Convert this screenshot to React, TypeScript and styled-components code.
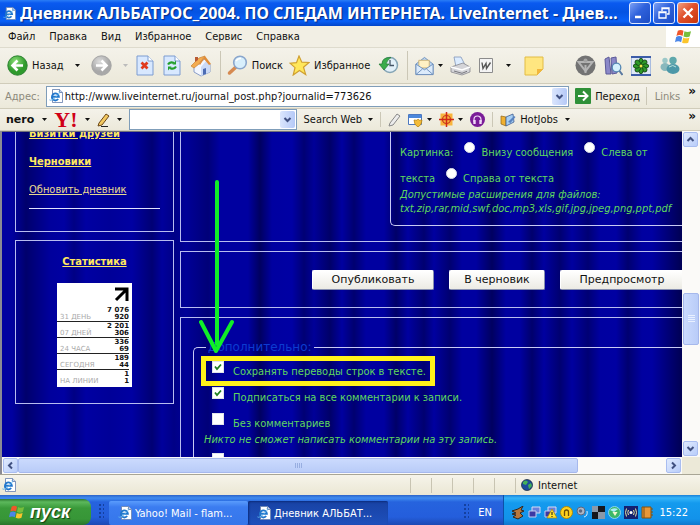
import React from "react";
import styled, { createGlobalStyle, css } from "styled-components";

const ui = `"DejaVu Sans Condensed", "DejaVu Sans", sans-serif`;
const wide = `"DejaVu Sans", sans-serif`;

const GlobalStyle = createGlobalStyle`
  * { box-sizing: border-box; }
  body { margin: 0; font: 11px ${ui}; color: #111; background: #ece9d8; }
  button, input { font: inherit; color: inherit; margin: 0; }
  button { padding: 0; border: 0; background: none; white-space: nowrap; }
  svg { display: block; flex: none; }
`;

const Screen = styled.div`
  display: flex;
  flex-direction: column;
  height: 100vh;
  overflow: hidden;
`;

/* ---------- window chrome ---------- */

const TitleBar = styled.header`
  display: flex;
  align-items: center;
  flex: none;
  height: 26px;
  padding: 0 1px 0 3px;
  gap: 4px;
  background: linear-gradient(#2a7df6 0, #0a5af0 3px, #0453e2 12px, #0860f8 21px, #0345c8 26px);
`;

const Title = styled.h1`
  flex: 1;
  min-width: 0;
  margin: 0;
  overflow: hidden;
  white-space: nowrap;
  text-overflow: ellipsis;
  color: #fff;
  font: 700 16px/24px "Noto Sans", "Open Sans", sans-serif;
  text-shadow: 1px 1px 1px #0a2a80;
`;

const WindowButtons = styled.div`
  display: flex;
  gap: 2px;
`;

const WindowButton = styled.button<{ $close?: boolean }>`
  display: grid;
  place-items: center;
  width: 22px;
  height: 22px;
  border: 1px solid #dfe8ff;
  border-radius: 3px;
  background: ${(p) =>
    p.$close
      ? "linear-gradient(135deg, #f0a080, #e0502c 45%, #c8340c)"
      : "linear-gradient(135deg, #7ba0f4, #2f62dc 45%, #1c4cc4)"};
`;

const MenuBar = styled.nav`
  display: flex;
  align-items: stretch;
  flex: none;
  height: 22px;
  padding-left: 8px;
  gap: 14px;
  background: #f2efe4;
  border-bottom: 1px solid #dedbcd;
`;

const FlagBox = styled.div`
  display: grid;
  place-items: center;
  width: 34px;
  margin-left: auto;
  background: #fff;
`;

const ToolBar = styled.div<{ $height: number }>`
  display: flex;
  align-items: center;
  flex: none;
  height: ${(p) => p.$height}px;
  background: linear-gradient(#f4f2ea, #ece9da);
  border-bottom: 1px solid #d0ccba;
  white-space: nowrap;
`;

const MainTools = styled(ToolBar)`
  padding: 0 20px 0 7px;
  gap: 8px;
`;

const Group = styled.div<{ $gap: number; $end?: boolean }>`
  display: flex;
  align-items: center;
  align-self: stretch;
  gap: ${(p) => p.$gap}px;
  margin-left: ${(p) => (p.$end ? "auto" : "0")};
`;

const ToolButton = styled.button`
  display: flex;
  align-items: center;
  gap: 4px;
`;

const Divider = styled.span`
  width: 1px;
  align-self: stretch;
  margin: 3px 0;
  background: #cbc7b6;
`;

const AddressTools = styled(ToolBar)`
  padding: 0 4px 0 5px;
  gap: 6px;
`;

const AddressLabel = styled.label`
  color: #8c897c;
`;

const AddressBox = styled.div`
  display: flex;
  align-items: center;
  flex: 1;
  height: 21px;
  padding-left: 2px;
  gap: 2px;
  border: 1px solid #7f9db9;
  background: #fff;
`;

const BareInput = styled.input`
  flex: 1;
  min-width: 0;
  height: 17px;
  padding: 0;
  border: 0;
  outline: 0;
  background: transparent;
`;

const DropButton = styled.button`
  display: grid;
  place-items: center;
  width: 15px;
  align-self: stretch;
  margin: 1px;
  border-radius: 2px;
  background: linear-gradient(90deg, #dbe6fd, #b5c9f7);
`;

const Muted = styled.span`
  color: #8c897c;
`;

const Chevron = styled.button`
  align-self: flex-start;
  font: bold 12px/14px ${wide};
`;

const SearchTools = styled(ToolBar)`
  padding: 0 4px 0 6px;
  gap: 7px;
`;

const Brand = styled.span`
  font: bold 11px/16px ${wide};
  margin-right: 1px;
`;

const YahooMark = styled.span`
  color: #d00018;
  font: bold 22px/20px "Liberation Serif", serif;
`;

const SearchBox = styled(AddressBox)`
  flex: 0 0 168px;
`;

/* ---------- page area ---------- */

const Viewport = styled.main`
  display: grid;
  grid-template: minmax(0, 1fr) 17px / minmax(0, 1fr) 18px;
  flex: 1;
  min-height: 0;
  border-left: 2px solid #8a8a94;
`;

const PageClip = styled.div`
  position: relative;
  overflow: hidden;
  border-top: 1px solid #70707a;
  background: linear-gradient(
    90deg,
    #0000a0 0, #0000a0 10px, #00006c 24px, #00009c 48px, #0000a2 62px, #000084 72px,
    #0000a2 84px, #000098 108px, #0000a2 130px, #000074 150px, #00009c 160px, #000086 172px,
    #000098 184px, #000078 206px, #0000a0 218px, #0000a0 246px, #000060 258px,
    #0000a0 270px, #0000a4 290px, #000074 302px, #000098 312px, #000068 328px,
    #0000a0 340px, #000070 352px, #0000a0 364px, #0000a0 382px, #000068 394px,
    #0000a0 406px, #000070 422px, #0000a0 432px, #000070 448px, #0000a0 460px,
    #0000a0 474px, #000060 490px, #0000a0 504px, #0000a0 518px, #00006c 530px,
    #0000a0 542px, #000070 558px, #0000a0 570px, #000074 586px, #0000a0 598px,
    #0000a2 614px, #000070 626px, #0000a0 640px, #0000a2 650px, #000058 678px
  );
`;

const ScrolledPage = styled.div`
  display: flex;
  align-items: flex-start;
  gap: 6px;
  margin-top: -13px;
  padding-left: 13px;
`;

const Sidebar = styled.aside`
  display: flex;
  flex-direction: column;
  gap: 8px;
  flex: none;
  width: 159px;
`;

const Frame = styled.section`
  border: 1px solid #b8bcf0;
`;

const LinksFrame = styled(Frame)`
  height: 113px;
  padding: 0 13px;
`;

const SideLink = styled.a<{ $bold?: boolean }>`
  display: block;
  color: ${(p) => (p.$bold ? "#ffe860" : "#e8d890")};
  font-weight: ${(p) => (p.$bold ? "bold" : "normal")};
  line-height: 28px;
`;

const Rule = styled.hr`
  margin: 4px 0 0;
  border: 0;
  border-top: 1px solid #e0e2ff;
`;

const StatsFrame = styled(Frame)`
  display: flex;
  flex-direction: column;
  align-items: center;
  padding: 7px 0 16px;
`;

const Counter = styled.div`
  width: 75px;
  margin-top: 7px;
  padding-bottom: 2px;
  background: #fff;
`;

const CounterTop = styled.div`
  display: flex;
  justify-content: flex-end;
  height: 22px;
  padding: 4px 3px 0;
`;

const CounterTable = styled.table`
  width: 72px;
  border-collapse: collapse;
  font: bold 7px/7px ${wide};

  tr + tr { border-top: 1px solid #222; }
  th, td { height: 16px; padding: 1px 0 0; vertical-align: bottom; }
  th { padding-left: 3px; color: #aaa; font-weight: normal; text-align: left; white-space: nowrap; }
  td { text-align: right; white-space: pre-line; }
`;

const Content = styled.div`
  display: flex;
  flex-direction: column;
  gap: 9px;
  flex: 1;
  min-width: 0;
`;

const Section = styled(Frame)<{ $height?: number }>`
  height: ${(p) => (p.$height ? p.$height + "px" : "auto")};
  border-right: 0;
`;

const FieldBox = styled.fieldset`
  min-width: 0;
  margin: 0;
  border: 1px solid #c8caf4;
  border-right: 0;
  border-radius: 5px 0 0 5px;
  color: #5fd85f;
`;

const UploadBox = styled(FieldBox)`
  height: 106px;
  margin-left: 209px;
  padding: 15px 0 0 9px;
  white-space: nowrap;
`;

const OptionLine = styled.div`
  display: flex;
  height: 26px;
  align-items: flex-end;
  line-height: 18px;
`;

const OptionLabel = styled.label`
  display: flex;
  align-items: flex-end;
  gap: 6px;
  margin-left: 11px;
`;

const Radio = styled.input`
  appearance: none;
  width: 11px;
  height: 11px;
  margin-bottom: 9px;
  border: 1px solid #d8dce8;
  border-radius: 50%;
  background: #fff;
`;

const Hint = styled.p`
  margin: 0;
  font-style: italic;
  line-height: 14px;
  white-space: nowrap;
`;

const ButtonRow = styled(Section)`
  display: flex;
  align-items: center;
  gap: 15px;
  padding-left: 131px;
`;

const FormButton = styled.button<{ $width: number }>`
  flex: none;
  width: ${(p) => p.$width}px;
  height: 20px;
  border: 1px solid #fff;
  border-right-color: #8890b0;
  border-bottom-color: #8890b0;
  border-radius: 2px;
  background: linear-gradient(#fff, #ecebe4);
  font: 11px ${wide};
`;

const ExtraBox = styled(FieldBox)`
  height: 190px;
  margin: 21px 0 0 12px;
  padding: 0 0 0 10px;
`;

const Legend = styled.legend`
  margin-left: 2px;
  padding: 0 2px;
  color: #0c3cd0;
  font: 12px/16px ${wide};
`;

const CheckLabel = styled.label`
  display: flex;
  align-items: flex-end;
  gap: 9px;
  height: 26px;
  padding-left: 8px;
  line-height: 18px;
`;

const Checkbox = styled.input`
  appearance: none;
  flex: none;
  width: 12px;
  height: 12px;
  margin-bottom: 8px;
  border: 1px solid #e0e4ea;
  background: #fff;
  &:checked {
    background: #fff
      url("data:image/svg+xml,%3Csvg xmlns='http://www.w3.org/2000/svg' viewBox='0 0 10 10'%3E%3Cpath d='M2 4.5l2 2.5 4-4.5' fill='none' stroke='%23208020' stroke-width='1.8'/%3E%3C/svg%3E")
      center / 10px;
  }
`;

const Highlight = styled.div`
  position: absolute;
  left: 199px;
  top: 224px;
  width: 234px;
  height: 30px;
  border: 5px solid #fff21a;
  pointer-events: none;
`;

const Arrow = styled.svg`
  position: absolute;
  left: 193px;
  top: 42px;
  pointer-events: none;
`;

/* ---------- scroll bars ---------- */

const ScrollTrack = styled.div<{ $row?: boolean }>`
  display: flex;
  flex-direction: ${(p) => (p.$row ? "row" : "column")};
  padding: 1px;
  background: #fbfaf8;
`;

const ScrollButton = styled.button`
  display: grid;
  place-items: center;
  flex: none;
  width: 15px;
  height: 15px;
  border: 1px solid #a9bdf0;
  border-radius: 2px;
  background: linear-gradient(135deg, #e0eafe, #b9cdfa);
`;

const Space = styled.span<{ $grow: number }>`
  flex: ${(p) => p.$grow} 0 0;
`;

const Thumb = styled.div<{ $grow: number; $row?: boolean }>`
  display: grid;
  place-items: center;
  flex: ${(p) => p.$grow} 0 0;
  border: 1px solid #a6b8ec;
  border-radius: 2px;
  background: ${(p) => (p.$row ? "linear-gradient(#cbdafd, #b9ccf8)" : "linear-gradient(90deg, #cbdafd, #b9ccf8)")};
`;

const Corner = styled.div`
  background: #ece9d8;
`;

/* ---------- status and task bars ---------- */

const StatusBar = styled.footer`
  display: flex;
  align-items: center;
  flex: none;
  height: 21px;
  padding-left: 2px;
  border-top: 1px solid #a8a595;
  background: linear-gradient(#f6f4ea, #ebe7d4);
`;

const StatusCell = styled.div<{ $width: number }>`
  display: flex;
  align-items: center;
  gap: 5px;
  flex: none;
  width: ${(p) => p.$width}px;
  height: 15px;
  padding-left: 5px;
  border-left: 1px solid #c8c4b2;
`;

const TaskBar = styled.div`
  display: flex;
  align-items: stretch;
  flex: none;
  height: 30px;
  color: #fff;
  background: linear-gradient(#2c63c8 0, #3f8cf0 3px, #2663de 7px, #245edc 22px, #1c49b4 30px);
`;

const StartButton = styled.button`
  display: flex;
  align-items: center;
  gap: 5px;
  width: 91px;
  margin-top: 4px;
  padding-left: 9px;
  border-radius: 0 8px 8px 0;
  background: linear-gradient(#2f7a2f 0, #5cb85c 3px, #3a9a3a 9px, #379637 20px, #28742a);
  font: italic bold 18px/22px "Liberation Sans", sans-serif;
  text-shadow: 1px 1px 1px #123f12;
`;

const Grip = styled.span`
  width: 5px;
  margin: 9px 5px 5px 8px;
  background: radial-gradient(circle at 1px 1px, #1440a0 1px, transparent 1px) 0 0 / 4px 4px;
`;

const Task = styled.button<{ $active?: boolean }>`
  display: flex;
  align-items: center;
  gap: 3px;
  width: ${(p) => (p.$active ? "140px" : "139px")};
  margin-top: 6px;
  padding-left: 9px;
  border-radius: 2px;
  background: ${(p) => (p.$active ? "linear-gradient(#1842a4, #1e50bc)" : "linear-gradient(#5a9cfc, #3b7cf0 6px, #3576ea)")};
  ${(p) => p.$active && css`box-shadow: inset 1px 1px 2px #0c2c7c;`}
`;

const TaskText = styled.span`
  overflow: hidden;
  text-overflow: ellipsis;
`;

const Tray = styled.div`
  display: flex;
  align-items: center;
  gap: 3px;
  width: 197px;
  padding: 5px 12px 0 8px;
  border-left: 1px solid #0c50a8;
  background: linear-gradient(#1a80d8 0, #34b4f8 3px, #149aee 8px, #1292ea 24px, #0f76cc);
`;

const Language = styled.span`
  align-self: center;
  padding: 5px 11px 0 4px;
`;

const Clock = styled.time`
  margin-left: auto;
`;

/* ---------- drawings ---------- */

const Caret = ({ dim }: { dim?: boolean }) => (
  <svg width="5" height="3"><path d="M0 0h5L2.500 3z" fill={dim ? "#bbb" : "#111"} /></svg>
);

const Angle = ({ turn = 0 }: { turn?: number }) => (
  <svg width="9" height="9" viewBox="0 0 9 9">
    <path d="M1.500 3l3 3 3-3" transform={`rotate(${turn} 4.500 4.500)`} fill="none" stroke="#405080" strokeWidth="2" />
  </svg>
);

const IePage = ({ size = 14 }: { size?: number }) => (
  <svg width={size} height={size} viewBox="0 0 16 16">
    <path d="M4 .5h8l3.500 3.500v11.500H4z" fill="#fff" stroke="#6a83b0" />
    <path d="M12 .5V4h3.500" fill="#c5d4ee" stroke="#6a83b0" />
    <path d="M10.500 11.500a4 4 0 1 1 .8-2.600H4" fill="none" stroke="#2277cc" strokeWidth="2.100" />
    <path d="M1 12C0 14 4 13 8 9s5-6 3-6" fill="none" stroke="#5fb4ec" strokeWidth="1" />
  </svg>
);

const Flag = ({ size = 17 }: { size?: number }) => (
  <svg width={size} height={size} viewBox="0 0 18 18">
    <path d="M3 3q3-2 6 0L8 8.500q-3-2-6.500 0z" fill="#f0562a" />
    <path d="M10 3.500q3 1.500 7 0L15.500 9q-3 1.500-6.500 0z" fill="#78be3c" />
    <path d="M1.200 9.500q3-2 6.500 0L6.500 15q-3-2-6.500 0z" fill="#4a86e8" />
    <path d="M8.700 10q3 1.800 6.600 0L14 15.500q-3 1.500-6.500 0z" fill="#fbc52c" />
  </svg>
);

const RoundArrow = ({ back }: { back?: boolean }) => (
  <svg width="21" height="21" viewBox="0 0 21 21">
    <defs>
      <radialGradient id={back ? "ga" : "gb"} cx="40%" cy="30%">
        <stop offset="0" stopColor={back ? "#8ee07a" : "#ddd"} />
        <stop offset="1" stopColor={back ? "#2f9a2c" : "#a8a8a8"} />
      </radialGradient>
    </defs>
    <circle cx="10.500" cy="10.500" r="9.700" fill={back ? "url(#ga)" : "url(#gb)"} stroke={back ? "#2b8230" : "#a4a4a4"} />
    <path
      d="M16 10.500H6M10.500 5.500l-5 5 5 5"
      transform={back ? undefined : "rotate(180 10.500 10.500)"}
      fill="none" stroke="#fff" strokeWidth="2.600"
    />
  </svg>
);

const PageIcon = ({ kind }: { kind: "stop" | "refresh" }) => (
  <svg width="18" height="21" viewBox="0 0 18 21">
    <path d="M1 1h11l5 5v14H1z" fill="#d8e8ff" stroke="#7c9cd0" />
    <path d="M12 1v5h5" fill="#fff" stroke="#7c9cd0" />
    {kind === "stop" ? (
      <path d="M5.500 7.500l6 6M11.500 7.500l-6 6" stroke="#e03a20" strokeWidth="2.800" />
    ) : (
      <g fill="none" stroke="#23a02c" strokeWidth="2.200">
        <path d="M5 9.500q2-3.500 6-1.500M13 11.500q-2 3.500-6 1.500" />
        <path d="M9.500 9.500H13V5.500zM8.500 11.500H5v4z" fill="#23a02c" stroke="none" />
      </g>
    )}
  </svg>
);

const Home = () => (
  <svg width="22" height="22" viewBox="0 0 22 22">
    <path d="M4 10v7l7 4 9-4V9l-5-5z" fill="#f3f7ff" stroke="#8a9ec8" />
    <path d="M11 12v9l9-4V9l-4-3z" fill="#cbdaf6" />
    <path d="M1 11L9 3l6-2-6 8-5 4z" fill="#f4ac50" stroke="#c88438" strokeWidth=".7" />
    <path d="M15 1l6 8-2 1-5-6-4 6-1-1z" fill="#e08c38" />
    <path d="M13 14l3-1v6l-3 1z" fill="#4c6cb4" />
    <path d="M5 2h3v3L5 7z" fill="#b85a34" />
  </svg>
);

const Search = () => (
  <svg width="21" height="21" viewBox="0 0 21 21">
    <path d="M2.500 18l7-6.500" stroke="#d68a50" strokeWidth="3.500" strokeLinecap="round" />
    <circle cx="13" cy="7.500" r="6.300" fill="#d8effc" stroke="#8aa6cc" strokeWidth="1.600" />
    <path d="M9 6q2-3 5-2.500" stroke="#fff" strokeWidth="1.500" fill="none" />
  </svg>
);

const Star = () => (
  <svg width="21" height="21" viewBox="0 0 21 21">
    <path d="M10 1l2.800 6.200 7.200.3-5.500 4.700 2.200 7.300-6.200-4-6.300 4.500 1.800-7.400L1 8.200l6.500-.6z" fill="#ffe75a" stroke="#d0a030" strokeWidth="1.200" />
  </svg>
);

const History = () => (
  <svg width="21" height="19" viewBox="0 0 21 19">
    <circle cx="12" cy="9" r="7.500" fill="#e2f0f8" stroke="#84a4b4" strokeWidth="1.500" />
    <path d="M12 4v5.500h4" stroke="#456" fill="none" strokeWidth="1.300" />
    <path d="M1 8l5 6 5-6H8q1-4 5-6.500Q4 1 4 8z" fill="#3aac4c" stroke="#207830" strokeWidth=".7" />
  </svg>
);

const Mail = () => (
  <svg width="19" height="20" viewBox="0 0 20 20">
    <path d="M1 8l9-7 9 7v11H1z" fill="#b9d4f2" stroke="#6f90bc" />
    <path d="M4 4h11v8H4z" fill="#fff1c4" stroke="#c8a860" strokeWidth=".8" />
    <path d="M1 8l9 6 9-6v11H1z" fill="#dcebfb" stroke="#6f90bc" />
    <path d="M1 19l7-6M19 19l-7-6" stroke="#6f90bc" />
  </svg>
);

const Printer = () => (
  <svg width="21" height="20" viewBox="0 0 21 20">
    <path d="M4 1h7l4 8-9 2z" fill="#dcecff" stroke="#8296b8" strokeWidth=".8" />
    <path d="M1 11l12-4 7 4v5l-8 3-11-3z" fill="#d4d4d8" stroke="#88888e" strokeWidth=".8" />
    <path d="M1 11l11 3 8-3" stroke="#fff" fill="none" strokeWidth="1.400" />
    <path d="M4 15l8 2.300 5-2" stroke="#77777d" fill="none" />
  </svg>
);

const Word = () => (
  <svg width="14" height="15" viewBox="0 0 14 15">
    <path d="M.5.5h13v14H.5z" fill="#f4f4f4" stroke="#8c8c8c" />
    <path d="M3 4.500l1 6 3-5 .500 5 4-6" fill="none" stroke="#555" strokeWidth="1.400" />
  </svg>
);

const Note = () => (
  <svg width="20" height="20" viewBox="0 0 20 20">
    <path d="M1 1h18v12l-6 6H1z" fill="#ffe680" stroke="#e2bc44" />
    <path d="M13 19v-6h6z" fill="#f2b63c" />
  </svg>
);

const GreyV = () => (
  <svg width="21" height="21" viewBox="0 0 21 21">
    <circle cx="10.500" cy="10.500" r="10" fill="#737373" />
    <path d="M3.500 7h14l-7 9z" fill="none" stroke="#b4b4b4" strokeWidth="2" />
    <path d="M10.500 10v8" stroke="#b4b4b4" strokeWidth="2" />
    <circle cx="10.500" cy="5.500" r="2" fill="#a4a4a4" />
  </svg>
);

const Books = () => (
  <svg width="19" height="20" viewBox="0 0 19 20">
    <path d="M1 3l4-2 2 17H2zM7 2l5-1 1 16-5 1z" fill="#8b88c8" stroke="#5c5a98" />
    <circle cx="12.500" cy="11.500" r="4.300" fill="#d4f0fc" stroke="#5688b4" strokeWidth="1.300" />
    <path d="M15.500 15l3 4" stroke="#5878a0" strokeWidth="2" />
  </svg>
);

const Flower = () => (
  <svg width="20" height="20" viewBox="0 0 20 20">
    <path d="M.5.5h19v19H.5z" fill="#dfe8f6" stroke="#a8bce0" />
    <path d="M0 1h20M0 19h20" stroke="#3c5ca8" strokeWidth="2" />
    {[0, 45, 90, 135, 180, 225, 270, 315].map((a) => (
      <ellipse key={a} cx="10" cy="5.500" rx="2.200" ry="3.200" fill="#2f9a28" stroke="#0f3c10" strokeWidth=".8" transform={`rotate(${a} 10 10)`} />
    ))}
    <circle cx="10" cy="10" r="1.500" fill="#f4e84c" />
  </svg>
);

const Buddies = () => (
  <svg width="21" height="19" viewBox="0 0 21 19">
    <circle cx="6" cy="4.500" r="2.700" fill="#9cc8c8" /><ellipse cx="6" cy="11" rx="4.500" ry="4" fill="#88b8bc" />
    <circle cx="14" cy="4.500" r="3.700" fill="#5fa8ac" /><ellipse cx="14" cy="13" rx="6.500" ry="5" fill="#4c98a8" />
    <path d="M10 11q4-3 7 0" stroke="#b8e0dc" fill="none" />
  </svg>
);

const Go = () => (
  <svg width="16" height="16" viewBox="0 0 16 16">
    <rect width="16" height="16" rx="1" fill="#2f9038" />
    <path d="M3 8h9M8 3.500L12.500 8 8 12.500" fill="none" stroke="#fff" strokeWidth="2" />
  </svg>
);

const Pencil = ({ grey }: { grey?: boolean }) => (
  <svg width="13" height="14" viewBox="0 0 13 14">
    <path d="M2 10L9 1l3 2-7 9-4 1z" fill={grey ? "#ececec" : "#f2c860"} stroke={grey ? "#888" : "#6c4818"} />
    {!grey && <path d="M4 13.500h7" stroke="#222" />}
  </svg>
);

const Shield = () => (
  <svg width="15" height="14" viewBox="0 0 15 14">
    <path d="M.5 1.500h13v10H.5z" fill="#fff" stroke="#4c78c0" /><path d="M1 2h12v3H1z" fill="#4c88dc" />
    <path d="M6 7q4 1 4-1 1 2 4 1 0 5-4 7-4-2-4-7z" fill="#f4bc38" stroke="#b07c10" strokeWidth=".7" />
  </svg>
);

const Target = () => (
  <svg width="15" height="15" viewBox="0 0 15 15">
    <path d="M1.500 1.500h12v12h-12z" fill="#f8b43c" />
    <circle cx="7.500" cy="7.500" r="4" fill="none" stroke="#c83820" strokeWidth="1.200" />
    <path d="M7.500 0v15M0 7.500h15" stroke="#d02818" strokeWidth="1.500" />
  </svg>
);

const Headset = () => (
  <svg width="15" height="15" viewBox="0 0 15 15">
    <circle cx="7.500" cy="7.500" r="7.500" fill="#7a1c98" />
    <path d="M4 10V7.500a3.500 3.500 0 0 1 7 0V10" fill="none" stroke="#f0d8f8" strokeWidth="1.200" />
    <path d="M4.500 8v4M10.500 8v4" stroke="#f0d8f8" strokeWidth="2.400" />
  </svg>
);

const Jobs = () => (
  <svg width="16" height="14" viewBox="0 0 16 14">
    <path d="M1 3l5 1v9l-5-2z" fill="#f0b030" stroke="#8c6418" strokeWidth=".7" />
    <path d="M6 4l7-3 1 8-8 4z" fill="#a8d0f4" stroke="#3c5c90" strokeWidth=".8" />
    <path d="M8 9l6-6 1.500 1-5 6z" fill="#5a84c0" />
  </svg>
);

const Globe = () => (
  <svg width="12" height="12" viewBox="0 0 12 12">
    <circle cx="6" cy="6" r="5.500" fill="#1c4c9c" stroke="#123" strokeWidth=".7" />
    <path d="M2 3q3-3 5 0L5 6 2 5zM7 6l3-2 1 3-3 3z" fill="#44b058" />
  </svg>
);

const Bird = () => (
  <svg width="13" height="14" viewBox="0 0 13 14">
    <path d="M0 5l6-2 5-3-2 4 3 1-4 2 3 3-5 3-5-2 3-2-4-1 4-1z" fill="#b8773c" stroke="#30261e" strokeWidth="1" />
  </svg>
);

const Monitors = ({ warn }: { warn?: boolean }) => (
  <svg width="13" height="13" viewBox="0 0 13 13">
    <path d="M4 1h8v6H4z" fill="#6880dc" stroke="#d4dcf4" /><path d="M1 5h7v6H1z" fill="#3c38a4" stroke="#c4ccf0" />
    {warn && <path d="M8 3l5 9H3z" fill="#ffe030" stroke="#a88408" strokeWidth=".7" />}
    {warn && <path d="M8 6v3M8 10v1" stroke="#111" />}
  </svg>
);

const YellowDot = () => (
  <svg width="13" height="13" viewBox="0 0 13 13">
    <circle cx="6.500" cy="6.500" r="6" fill="#ffd21c" stroke="#b08808" />
    <path d="M4.500 10V6a2 2 0 0 1 4 0v4" fill="none" stroke="#6c4c08" strokeWidth="1.300" />
  </svg>
);

const Speaker = () => (
  <svg width="13" height="13" viewBox="0 0 13 13">
    <circle cx="5" cy="5" r="4" fill="#aeb6c4" stroke="#5c6880" /><circle cx="4.500" cy="5" r="1.800" fill="#5c6880" />
    <path d="M8 11q4-1 3-6" fill="none" stroke="#d8ecfc" />
  </svg>
);

const Checker = () => (
  <svg width="13" height="13" viewBox="0 0 13 13">
    <path d="M0 0h13v13H0z" fill="#8c98a8" /><path d="M6 0h7v6H6zM0 6h6v7H0z" fill="#16161c" />
  </svg>
);

const GreenBall = () => (
  <svg width="13" height="13" viewBox="0 0 13 13">
    <circle cx="6.500" cy="6.500" r="6" fill="#3cb868" stroke="#88d0f4" />
    <path d="M2 4q3-3 8-1L6 6z" fill="#a8ecf8" /><path d="M4.500 6h5L7 10z" fill="#f4f8d0" />
  </svg>
);

const Wave = () => (
  <svg width="14" height="13" viewBox="0 0 14 13">
    <path d="M0 0h14v13H0z" fill="#142070" /><circle cx="7" cy="6.500" r="1.500" fill="#fff" />
    <path d="M4.500 4q-1.500 2.500 0 5M9.500 4q1.500 2.500 0 5M2.500 2.500q-2 4 0 8M11.500 2.500q2 4 0 8" fill="none" stroke="#e8e4a0" />
  </svg>
);

const Book = () => (
  <svg width="12" height="13" viewBox="0 0 12 13">
    <path d="M1 1h9v11H1z" fill="#e89838" stroke="#84500c" /><path d="M3 1v11M10 3h2M10 6h2M10 9h2" stroke="#84500c" />
  </svg>
);

/* ---------- data ---------- */

const menus = ["Файл", "Правка", "Вид", "Избранное", "Сервис", "Справка"];

const stats: [string, string, string][] = [
  ["31 ДЕНЬ", "7 076", "920"],
  ["07 ДНЕЙ", "2 201", "306"],
  ["24 ЧАСА", "336", "69"],
  ["СЕГОДНЯ", "189", "44"],
  ["НА ЛИНИИ", "1", "1"],
];

export default function App() {
  return (
    <Screen>
      <GlobalStyle />
      <TitleBar>
        <IePage size={13} />
        <Title>Дневник АЛЬБАТРОС_2004. ПО СЛЕДАМ ИНТЕРНЕТА. LiveInternet - Дневник</Title>
        <WindowButtons>
          <WindowButton aria-label="Свернуть">
            <svg width="14" height="14"><path d="M2 11h6" stroke="#fff" strokeWidth="2.500" /></svg>
          </WindowButton>
          <WindowButton aria-label="Восстановить">
            <svg width="14" height="14">
              <path d="M5 5V2h7v6h-2M2 6h7v6H2zM5 2.500h7M2 6.500h7" fill="none" stroke="#fff" strokeWidth="1.300" />
            </svg>
          </WindowButton>
          <WindowButton $close aria-label="Закрыть">
            <svg width="14" height="14"><path d="M2.500 2.500l9 9M11.500 2.500l-9 9" stroke="#fff" strokeWidth="2.300" /></svg>
          </WindowButton>
        </WindowButtons>
      </TitleBar>

      <MenuBar>
        {menus.map((m) => <button key={m}>{m}</button>)}
        <FlagBox><Flag /></FlagBox>
      </MenuBar>

      <MainTools $height={36}>
        <Group $gap={11}>
          <ToolButton><RoundArrow back />Назад</ToolButton>
          <Caret />
          <ToolButton aria-label="Вперед"><RoundArrow /></ToolButton>
          <Caret dim />
        </Group>
        <Group $gap={9}>
          <ToolButton aria-label="Остановить"><PageIcon kind="stop" /></ToolButton>
          <ToolButton aria-label="Обновить"><PageIcon kind="refresh" /></ToolButton>
          <ToolButton aria-label="Домой"><Home /></ToolButton>
        </Group>
        <Group $gap={6}>
          <Divider />
          <ToolButton><Search />Поиск</ToolButton>
          <ToolButton><Star />Избранное</ToolButton>
        </Group>
        <ToolButton aria-label="Журнал"><History /></ToolButton>
        <Group $gap={7}>
          <Divider />
          <ToolButton aria-label="Почта"><Mail /><Caret /></ToolButton>
          <ToolButton aria-label="Печать"><Printer /></ToolButton>
        </Group>
        <Group $gap={13}>
          <ToolButton aria-label="Правка"><Word /></ToolButton>
          <Caret />
          <ToolButton aria-label="Заметка"><Note /></ToolButton>
        </Group>
        <Group $gap={8} $end>
          <GreyV /><Books /><Flower /><Buddies />
        </Group>
      </MainTools>

      <AddressTools $height={25}>
        <AddressLabel htmlFor="address">Адрес:</AddressLabel>
        <AddressBox>
          <IePage />
          <BareInput id="address" defaultValue="http://www.liveinternet.ru/journal_post.php?journalid=773626" />
          <DropButton aria-label="Адреса"><Angle /></DropButton>
        </AddressBox>
        <ToolButton><Go />Переход</ToolButton>
        <Group $gap={8}>
          <Divider />
          <Muted>Links</Muted>
          <Chevron aria-label="Еще">»</Chevron>
        </Group>
      </AddressTools>

      <SearchTools $height={22}>
        <Brand>nero</Brand>
        <Caret />
        <YahooMark>Y!</YahooMark>
        <Caret />
        <Pencil />
        <Caret />
        <SearchBox>
          <BareInput aria-label="Search" />
          <DropButton aria-label="Запросы"><Angle /></DropButton>
        </SearchBox>
        <Group $gap={6}>
          <button>Search Web</button>
          <Caret />
        </Group>
        <Divider />
        <Pencil grey />
        <Group $gap={4}><Shield /><Caret /></Group>
        <Group $gap={4}><Target /><Caret /></Group>
        <Headset />
        <Divider />
        <ToolButton><Jobs />HotJobs</ToolButton>
        <Caret />
        <Group $gap={0} $end><Chevron aria-label="Еще">»</Chevron></Group>
      </SearchTools>

      <Viewport>
        <PageClip>
          <ScrolledPage>
            <Sidebar>
              <LinksFrame>
                <SideLink href="#cards" $bold>Визитки друзей</SideLink>
                <SideLink href="#drafts" $bold>Черновики</SideLink>
                <SideLink href="#update">Обновить дневник</SideLink>
                <Rule />
              </LinksFrame>
              <StatsFrame>
                <SideLink href="#stats" $bold>Статистика</SideLink>
                <Counter>
                  <CounterTop>
                    <svg width="15" height="15" viewBox="0 0 15 15">
                      <path d="M1 2h12v12M13 2L2 13" fill="none" stroke="#000" strokeWidth="3" />
                    </svg>
                  </CounterTop>
                  <CounterTable>
                    <tbody>
                      {stats.map(([name, hits, visitors]) => (
                        <tr key={name}>
                          <th scope="row">{name}</th>
                          <td>{hits}{"\n"}{visitors}</td>
                        </tr>
                      ))}
                    </tbody>
                  </CounterTable>
                </Counter>
              </StatsFrame>
            </Sidebar>

            <Content>
              <Section $height={123}>
                <UploadBox>
                  <OptionLine>
                    Картинка:
                    <OptionLabel><Radio type="radio" name="place" />Внизу сообщения</OptionLabel>
                    <OptionLabel><Radio type="radio" name="place" />Слева от</OptionLabel>
                  </OptionLine>
                  <OptionLine>
                    текста
                    <OptionLabel><Radio type="radio" name="place" />Справа от текста</OptionLabel>
                  </OptionLine>
                  <Hint>Допустимые расширения для файлов:</Hint>
                  <Hint>txt,zip,rar,mid,swf,doc,mp3,xls,gif,jpg,jpeg,png,ppt,pdf</Hint>
                </UploadBox>
              </Section>
              <ButtonRow $height={57}>
                <FormButton $width={122}>Опубликовать</FormButton>
                <FormButton $width={96}>В черновик</FormButton>
                <FormButton $width={124}>Предпросмотр</FormButton>
              </ButtonRow>
              <Section>
                <ExtraBox>
                  <Legend>Дополнительно:</Legend>
                  <CheckLabel><Checkbox type="checkbox" defaultChecked />Сохранять переводы строк в тексте.</CheckLabel>
                  <CheckLabel><Checkbox type="checkbox" defaultChecked />Подписаться на все комментарии к записи.</CheckLabel>
                  <CheckLabel><Checkbox type="checkbox" />Без комментариев</CheckLabel>
                  <Hint>Никто не сможет написать комментарии на эту запись.</Hint>
                  <CheckLabel><Checkbox type="checkbox" aria-label="Закрытая запись" /></CheckLabel>
                </ExtraBox>
              </Section>
            </Content>
          </ScrolledPage>
          <Arrow width="46" height="180" viewBox="0 0 46 180">
            <path d="M22 8v162M6 148l15 29 16-29" fill="none" stroke="#10ee28" strokeWidth="4" strokeLinecap="round" strokeLinejoin="round" />
          </Arrow>
          <Highlight />
        </PageClip>
        <ScrollTrack>
          <ScrollButton aria-label="Вверх"><Angle turn={180} /></ScrollButton>
          <Space $grow={147} />
          <Thumb $grow={50}>
            <svg width="7" height="7"><path d="M0 .5h7M0 2.500h7M0 4.500h7M0 6.500h7" stroke="#e8f0ff" /></svg>
          </Thumb>
          <Space $grow={97} />
          <ScrollButton aria-label="Вниз"><Angle /></ScrollButton>
        </ScrollTrack>
        <ScrollTrack $row>
          <ScrollButton aria-label="Влево"><Angle turn={90} /></ScrollButton>
          <Thumb $grow={560} $row>
            <svg width="7" height="7"><path d="M.5 1v5M2.500 1v5M4.500 1v5M6.500 1v5" stroke="#98aee0" /></svg>
          </Thumb>
          <Space $grow={88} />
          <ScrollButton aria-label="Вправо"><Angle turn={-90} /></ScrollButton>
        </ScrollTrack>
        <Corner />
      </Viewport>

      <StatusBar>
        <IePage />
        <Space $grow={1} />
        {[1, 2, 3, 4, 5].map((n) => <StatusCell key={n} $width={21} />)}
        <StatusCell $width={185}><Globe />Internet</StatusCell>
      </StatusBar>

      <TaskBar>
        <StartButton><Flag size={16} />пуск</StartButton>
        <Grip />
        <Task><IePage /><TaskText>Yahoo! Mail - flam...</TaskText></Task>
        <Task $active><IePage /><TaskText>Дневник АЛЬБАТ...</TaskText></Task>
        <Space $grow={1} />
        <Grip />
        <Language>EN</Language>
        <Tray>
          <Bird /><Monitors /><Monitors warn /><YellowDot /><Speaker /><Checker /><GreenBall /><Wave /><Book />
          <Clock>15:22</Clock>
        </Tray>
      </TaskBar>
    </Screen>
  );
}
